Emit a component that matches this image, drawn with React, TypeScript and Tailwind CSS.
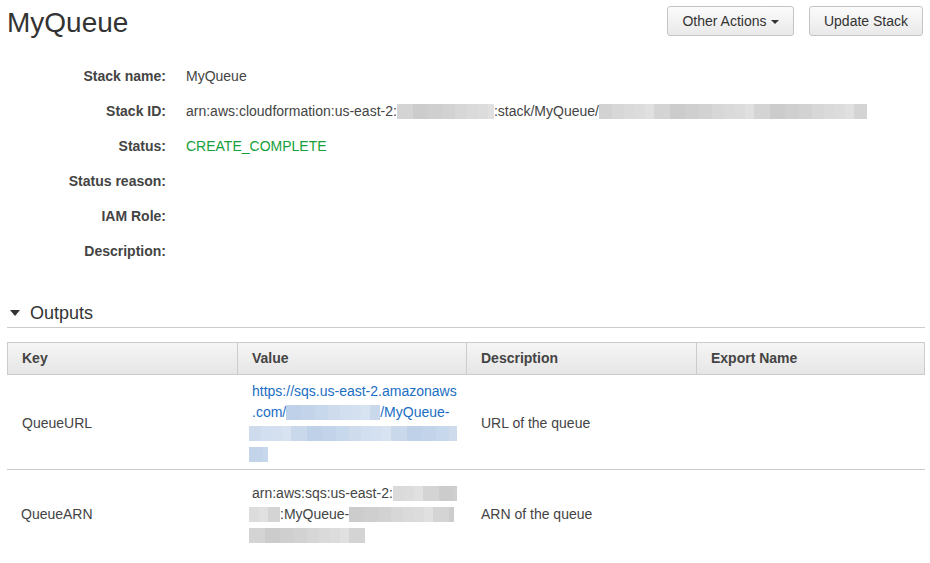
import React from "react";

type BlurProps = { w: number; h?: number; tone: "gray" | "blue"; seed?: number; className?: string };

const grayShades = ["#d4d4d4", "#dadada", "#cfcfcf", "#e0e0e0", "#d7d7d7", "#cccccc", "#dcdcdc", "#d2d2d2"];
const blueShades = ["#c9d8ea", "#d2dff0", "#c3d4ea", "#d7e3f1", "#cddbed", "#bfd1e8", "#d4e0ef", "#c7d7ec"];

function Blur({ w, h = 15, tone, seed = 0, className = "" }: BlurProps) {
  const shades = tone === "gray" ? grayShades : blueShades;
  const segs: { width: number; color: string }[] = [];
  let rem = w;
  let i = seed;
  while (rem > 0) {
    const sw = Math.min(rem, 9 + ((i * 7) % 8));
    segs.push({ width: sw, color: shades[(i * 5 + 3) % shades.length] });
    rem -= sw;
    i++;
  }
  return (
    <span className={`inline-flex align-middle ${className}`} style={{ height: h }}>
      {segs.map((s, k) => (
        <span key={k} style={{ width: s.width, height: h, backgroundColor: s.color }} />
      ))}
    </span>
  );
}

function Btn({ children, w }: { children: React.ReactNode; w: string }) {
  return (
    <button
      className={`${w} h-[30px] flex items-center justify-center rounded-[3px] border border-[#c4c4c4] bg-gradient-to-b from-[#fbfbfb] to-[#e9e9e9] pt-[1px] text-[14px] text-[#333]`}
    >
      {children}
    </button>
  );
}

function Row({ label, children }: { label: string; children?: React.ReactNode }) {
  return (
    <div className="flex h-[35px] items-center">
      <div className="w-[166px] text-right font-bold text-[14px] text-[#444]">{label}</div>
      <div className="ml-[20px] flex items-center text-[14px] text-[#444]">{children}</div>
    </div>
  );
}

export default function App() {
  return (
    <div
      className="w-[930px] h-[563px] overflow-hidden bg-white text-[#444]"
      style={{ fontFamily: '"Liberation Sans", Arial, sans-serif' }}
    >
      {/* Header */}
      <div className="flex h-[59px] items-start justify-between pl-[7px] pr-[7px]">
        <h1 className="mt-[3px] text-[28px] leading-[40px] text-[#333] font-normal">MyQueue</h1>
        <div className="mt-[6px] flex gap-[15px]">
          <Btn w="w-[127px]">
            <span>Other Actions</span>
            <span className="ml-[4px] mt-[1px] inline-block h-0 w-0 border-x-[4px] border-t-[4px] border-x-transparent border-t-[#333]" />
          </Btn>
          <Btn w="w-[114px]">Update Stack</Btn>
        </div>
      </div>

      {/* Details */}
      <div>
        <Row label="Stack name:">MyQueue</Row>
        <Row label="Stack ID:">
          <span>arn:aws:cloudformation:us-east-2:</span>
          <Blur w={97} tone="gray" seed={1} />
          <span>:stack/MyQueue/</span>
          <Blur w={268} tone="gray" seed={4} />
        </Row>
        <Row label="Status:">
          <span className="text-[#15a03a]">CREATE_COMPLETE</span>
        </Row>
        <Row label="Status reason:" />
        <Row label="IAM Role:" />
        <Row label="Description:" />
      </div>

      {/* Outputs header */}
      <div className="ml-[7px] mr-[5px] mt-[32px] flex items-center border-b border-[#cccccc] pb-[2px]">
        <span className="ml-[3px] inline-block h-0 w-0 border-x-[5px] border-t-[6px] border-x-transparent border-t-[#333]" />
        <span className="ml-[10px] text-[18px] leading-[24px] text-[#333]">Outputs</span>
      </div>

      {/* Table */}
      <div className="ml-[7px] mr-[5px] mt-[14px] text-[14px]">
        <div className="grid grid-cols-[230px_229px_230px_1fr] h-[33px] border border-[#cccccc] bg-gradient-to-b from-[#f5f5f5] to-[#e6e6e6] font-bold text-[#444]">
          <div className="flex items-center pl-[14px] border-r border-[#cccccc]">Key</div>
          <div className="flex items-center pl-[14px] border-r border-[#cccccc]">Value</div>
          <div className="flex items-center pl-[14px] border-r border-[#cccccc]">Description</div>
          <div className="flex items-center pl-[14px]">Export Name</div>
        </div>

        <div className="grid grid-cols-[230px_229px_230px_1fr] border-b border-[#cccccc] pt-[6px] pb-[4px]">
          <div className="flex items-center pl-[15px]">QueueURL</div>
          <div className="pl-[12px] leading-[21px] text-[#1a6ec4]">
            <div className="pl-[3px]">https://sqs.us-east-2.amazonaws</div>
            <div className="flex items-center pl-[3px]">
              <span>.com/</span>
              <Blur w={94} tone="blue" seed={2} />
              <span>/MyQueue-</span>
            </div>
            <div className="flex items-center h-[21px]">
              <Blur w={208} tone="blue" seed={5} />
            </div>
            <div className="flex items-center h-[21px]">
              <Blur w={19} tone="blue" seed={3} />
            </div>
          </div>
          <div className="flex items-center pl-[15px]">URL of the queue</div>
          <div />
        </div>

        <div className="grid grid-cols-[230px_229px_230px_1fr] pt-[13px] pb-[12px]">
          <div className="flex items-center pl-[14px]">QueueARN</div>
          <div className="pl-[12px] leading-[21px]">
            <div className="flex items-center pl-[3px]">
              <span>arn:aws:sqs:us-east-2:</span>
              <Blur w={64} tone="gray" seed={6} />
            </div>
            <div className="flex items-center h-[21px]">
              <Blur w={31} tone="gray" seed={7} />
              <span>:MyQueue-</span>
              <Blur w={105} tone="gray" seed={2} />
            </div>
            <div className="flex items-center h-[21px]">
              <Blur w={116} tone="gray" seed={1} />
            </div>
          </div>
          <div className="flex items-center pl-[15px]">ARN of the queue</div>
          <div />
        </div>
      </div>
    </div>
  );
}
